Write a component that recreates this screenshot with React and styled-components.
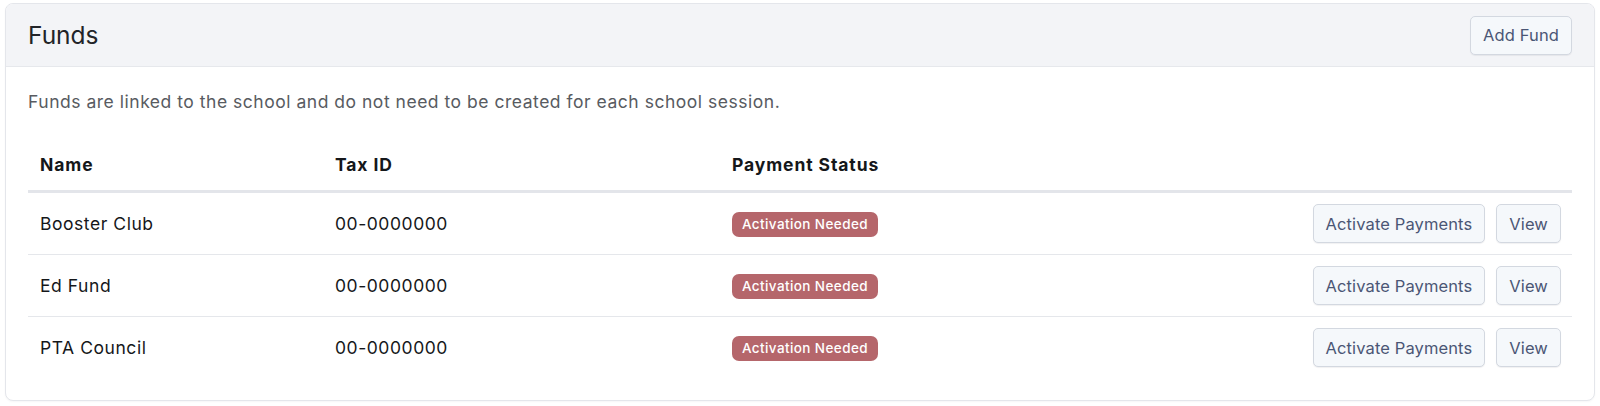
import React from "react";
import styled, { createGlobalStyle } from "styled-components";

const Global = createGlobalStyle`
  html, body { margin: 0; padding: 0; background: #ffffff; }
  body { font-family: Inter, "Noto Sans", "Liberation Sans", sans-serif; -webkit-font-smoothing: antialiased; }
  * { box-sizing: border-box; }
`;

const Page = styled.div`
  padding: 3px 5px 6px 5px;
`;

const Card = styled.section`
  border: 1px solid #e4e6eb;
  border-radius: 8px;
  background: #fff;
  overflow: hidden;
  box-shadow: 0 1px 2px rgba(16, 24, 40, 0.04);
`;

const CardHeader = styled.header`
  display: flex;
  align-items: center;
  justify-content: space-between;
  height: 63px;
  padding: 0 22px 0 22px;
  background: #f3f4f7;
  border-bottom: 1px solid #e6e8ec;
`;

const Title = styled.h2`
  margin: 0;
  font-size: 24.5px;
  font-weight: 400;
  color: #222428;
  letter-spacing: 0;
`;

const Button = styled.button`
  font-family: inherit;
  font-size: 16.5px;
  letter-spacing: 0.12px;
  color: #4b5675;
  background: #f5f8fb;
  border: 1px solid #d3d8e0;
  border-radius: 5px;
  height: 39px;
  padding: 0 12px;
  box-shadow: 0 1px 1px rgba(16, 24, 40, 0.06);
  cursor: pointer;
  white-space: nowrap;
`;

const CardBody = styled.div`
  padding: 22px 22px 21px 22px;
`;

const Description = styled.p`
  margin: 0 0 26px 0;
  font-size: 17.5px;
  letter-spacing: 0.52px;
  line-height: 26px;
  color: #585b61;
`;

const Table = styled.table`
  width: 100%;
  border-collapse: collapse;
  font-size: 17.5px;
  letter-spacing: 0.55px;
  color: #15171a;
`;

const Th = styled.th`
  text-align: left;
  font-weight: 700;
  font-size: 17.5px;
  letter-spacing: 0.9px;
  padding: 12px 12px 13px 12px;
  line-height: 24px;
  border-bottom: 3px solid #e3e5ea;
  width: ${(p) => p.$w || "auto"};
`;

const Tr = styled.tr`
  & + & td { border-top: 1px solid #e5e7eb; }
`;

const Td = styled.td`
  padding: 11px 12px;
  height: 62px;
  line-height: 24px;
  vertical-align: middle;
  text-align: ${(p) => (p.$right ? "right" : "left")};
`;

const Actions = styled.div`
  display: flex;
  justify-content: flex-end;
  gap: 11px;
  margin-right: -1px;
  letter-spacing: 0;
`;

const Badge = styled.span`
  display: inline-block;
  background: #b5666b;
  color: #fff;
  font-size: 13.5px;
  font-weight: 500;
  line-height: 25px;
  height: 25px;
  padding: 0 10px;
  border-radius: 7px;
  letter-spacing: 0.4px;
`;

const funds = [
  { name: "Booster Club", tax: "00-0000000" },
  { name: "Ed Fund", tax: "00-0000000" },
  { name: "PTA Council", tax: "00-0000000" },
];

export default function App() {
  return (
    <>
      <Global />
      <Page>
        <Card>
          <CardHeader>
            <Title>Funds</Title>
            <Button>Add Fund</Button>
          </CardHeader>
          <CardBody>
            <Description>
              Funds are linked to the school and do not need to be created for each school session.
            </Description>
            <Table>
              <thead>
                <tr>
                  <Th $w="295px">Name</Th>
                  <Th $w="397px">Tax ID</Th>
                  <Th>Payment Status</Th>
                  <Th />
                </tr>
              </thead>
              <tbody>
                {funds.map((f) => (
                  <Tr key={f.name}>
                    <Td>{f.name}</Td>
                    <Td>{f.tax}</Td>
                    <Td>
                      <Badge>Activation Needed</Badge>
                    </Td>
                    <Td $right>
                      <Actions>
                        <Button>Activate Payments</Button>
                        <Button>View</Button>
                      </Actions>
                    </Td>
                  </Tr>
                ))}
              </tbody>
            </Table>
          </CardBody>
        </Card>
      </Page>
    </>
  );
}
